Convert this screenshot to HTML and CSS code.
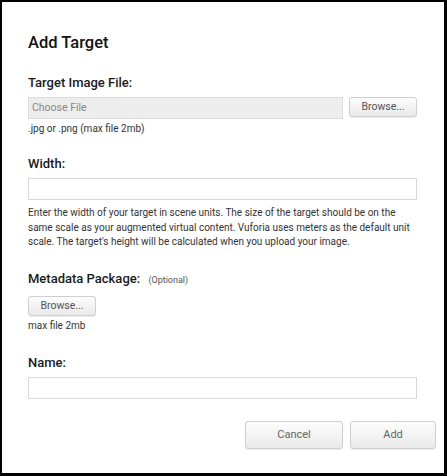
FILE: index.html
```html
<!DOCTYPE html>
<html>
<head>
<meta charset="utf-8">
<link rel="stylesheet" href="styles.css">
</head>
<body>
<div class="modal">
  <h1 class="title">Add Target</h1>

  <section class="field field-image">
    <label class="label">Target Image File:</label>
    <div class="file-row">
      <div class="file-input">Choose File</div>
      <button class="btn btn-small">Browse...</button>
    </div>
    <p class="hint">.jpg or .png (max file 2mb)</p>
  </section>

  <section class="field field-width">
    <label class="label">Width:</label>
    <div class="text-input"></div>
    <p class="help">Enter the width of your target in scene units. The size of the target should be on the same scale as your augmented virtual content. Vuforia uses meters as the default unit scale. The target's height will be calculated when you upload your image.</p>
  </section>

  <section class="field field-meta">
    <label class="label">Metadata Package: <span class="optional">(Optional)</span></label>
    <button class="btn btn-small">Browse...</button>
    <p class="hint">max file 2mb</p>
  </section>

  <section class="field field-name">
    <label class="label">Name:</label>
    <div class="text-input"></div>
  </section>

  <div class="footer">
    <button class="btn btn-large btn-cancel">Cancel</button>
    <button class="btn btn-large btn-add">Add</button>
  </div>
</div>
</body>
</html>
```
FILE: styles.css
```css
html, body {
  margin: 0;
  padding: 0;
  background: #fff;
}
body {
  font-family: Roboto, "Liberation Sans", Arial, sans-serif;
  color: #222;
}
.modal {
  box-sizing: border-box;
  width: 447px;
  height: 476px;
  border-top: 2px solid #000;
  border-left: 2px solid #000;
  border-right: 3px solid #000;
  border-bottom: 3px solid #000;
  padding: 0 27px 0 26px;
  overflow: hidden;
  background: #fff;
}
.title {
  margin: 31px 0 0 0;
  font-size: 16.5px;
  line-height: 20px;
  font-weight: 500;
  color: #111;
}
.field {
  display: flex;
  flex-direction: column;
  align-items: flex-start;
}
.field-image { margin-top: 22px; }
.field-width { margin-top: 21px; }
.field-meta { margin-top: 21px; }
.field-name { margin-top: 23px; }
.label {
  display: block;
  font-size: 13px;
  line-height: 16px;
  font-weight: 500;
  color: #1a1a1a;
  margin-bottom: 6px;
}
.optional {
  font-weight: normal;
  font-size: 9px;
  color: #555;
  margin-left: 5px;
}
.file-row {
  display: flex;
  width: 100%;
  align-items: flex-start;
  gap: 6px;
}
.file-input {
  box-sizing: border-box;
  flex: 1;
  height: 22px;
  background: #ededed;
  border: 1px solid #dcdcdc;
  font-size: 10.5px;
  line-height: 20px;
  padding-left: 3px;
  color: #888;
}
.btn {
  box-sizing: border-box;
  font-family: Roboto, "Liberation Sans", Arial, sans-serif;
  background: linear-gradient(#fdfdfd, #e9e9e9);
  border: 1px solid #cfcfcf;
  border-radius: 3px;
  box-shadow: 0 1px 1px rgba(0,0,0,0.08);
  color: #555;
  padding: 0;
  cursor: pointer;
}
.btn-small {
  width: 68px;
  height: 20px;
  font-size: 10.5px;
  line-height: 18px;
}
.hint {
  margin: 4px 0 0 0;
  font-size: 10px;
  line-height: 12px;
  color: #333;
}
.text-input {
  box-sizing: border-box;
  width: 100%;
  height: 22px;
  border: 1px solid #d8d8d8;
  background: #fff;
}
.help {
  margin: 6px 0 0 0;
  font-size: 10px;
  line-height: 14.5px;
  color: #333;
}
.field-meta .btn-small {
  margin-top: 2px;
}
.footer {
  display: flex;
  justify-content: flex-end;
  gap: 7px;
  margin-top: 22px;
  margin-right: -19px;
}
.btn-large {
  height: 28px;
  font-size: 11px;
  color: #666;
}
.btn-cancel { width: 98px; }
.btn-add { width: 86px; }
```
